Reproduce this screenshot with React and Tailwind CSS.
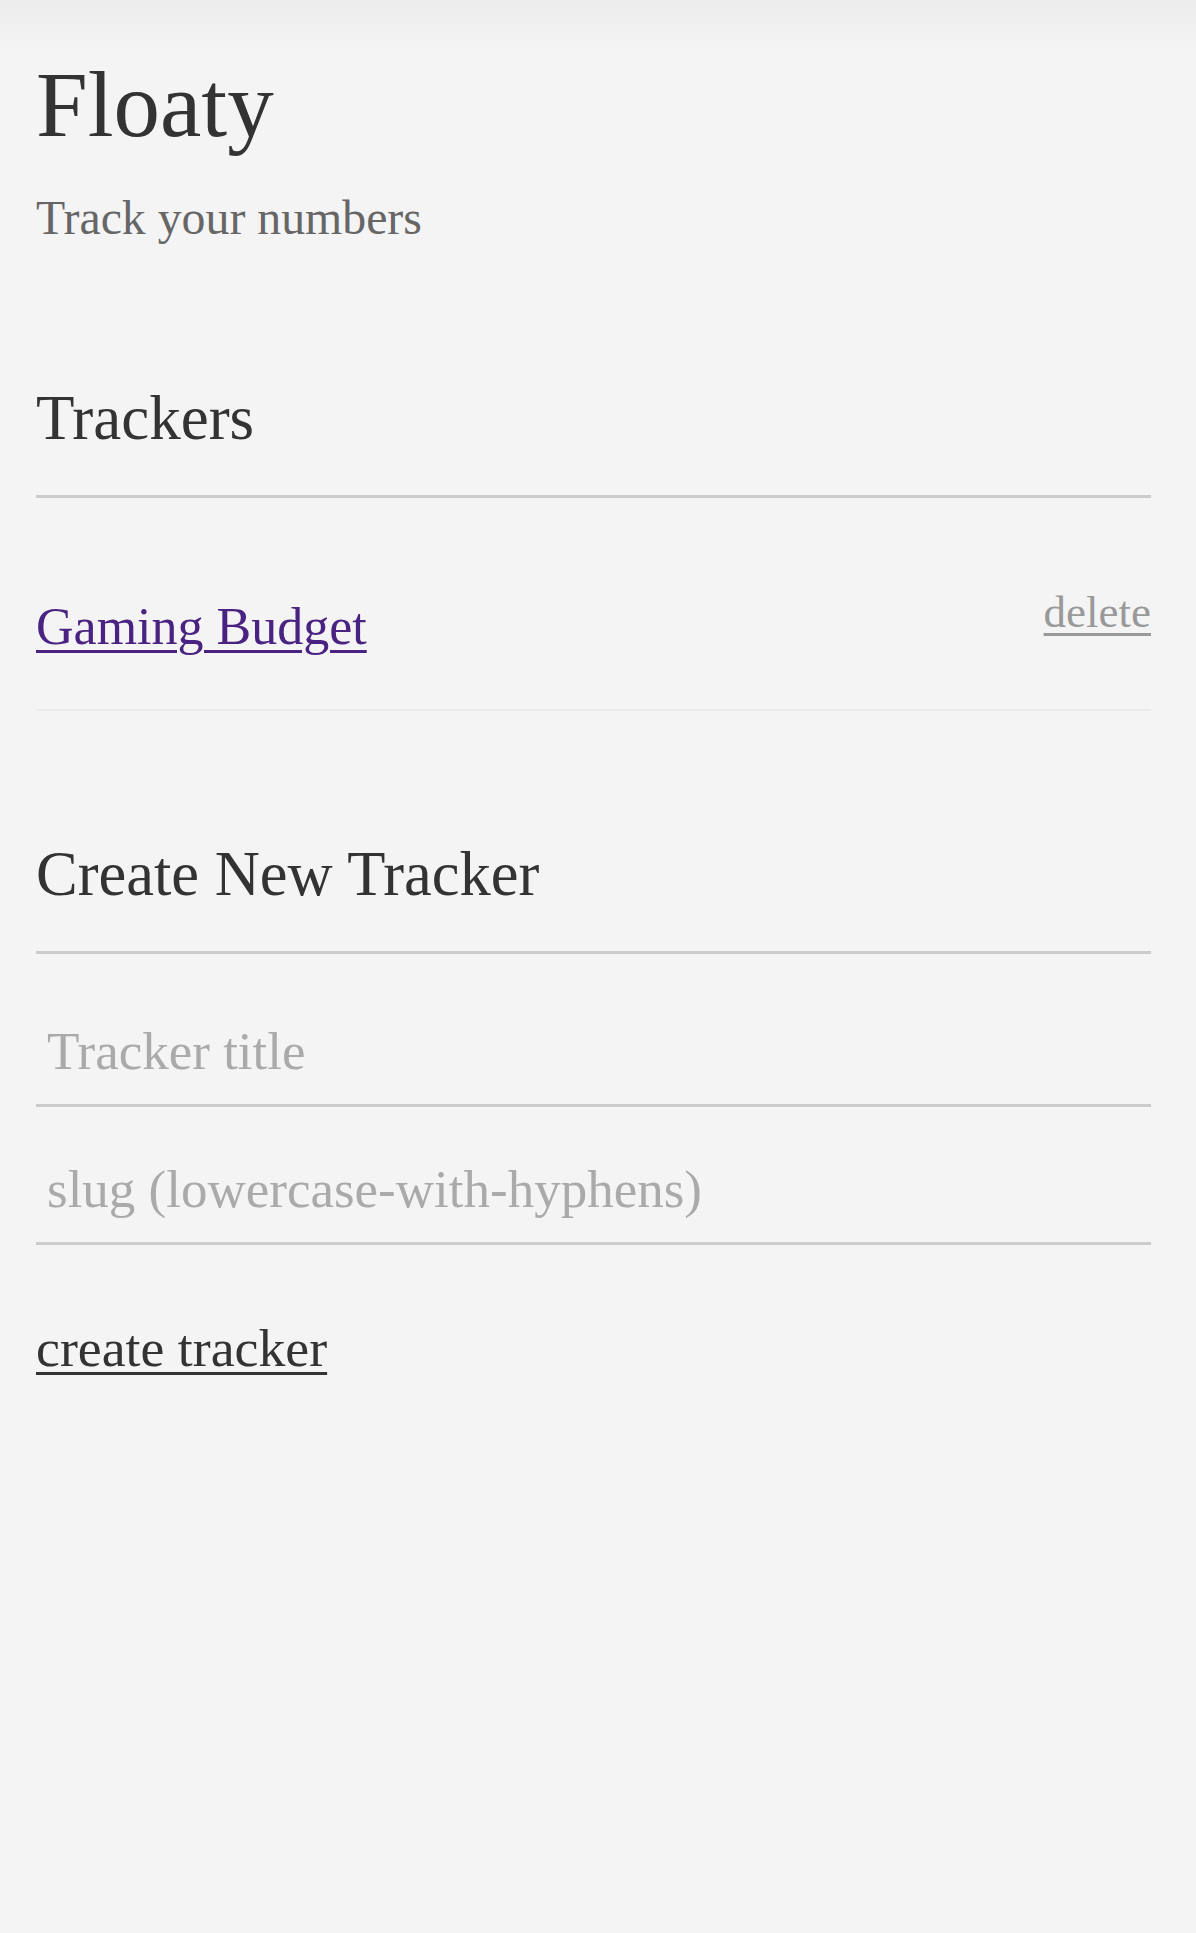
import React, { useState } from "react";

const serif = { fontFamily: '"Liberation Serif", "Times New Roman", serif' };

const App = () => {
  const [trackers, setTrackers] = useState([{ title: "Gaming Budget", slug: "gaming-budget" }]);
  const [form, setForm] = useState({ title: "", slug: "" });

  const handleChange = (e) => {
    setForm({ ...form, [e.target.name]: e.target.value });
  };

  const handleCreate = (e) => {
    e.preventDefault();
    if (!form.title || !form.slug) return;
    setTrackers([...trackers, form]);
    setForm({ title: "", slug: "" });
  };

  return (
    <div className="min-h-screen bg-[#f4f4f4] text-[#333]" style={serif}>
      <div className="h-[52px] bg-gradient-to-b from-[#ededed] to-[#f4f4f4]" />
      <div className="pl-[36px] pr-[45px]">
        <h1 className="mt-[6px] text-[93px] leading-[93px] font-normal">Floaty</h1>
        <p className="mt-[43px] text-[47.8px] leading-[48px] text-[#666]">Track your numbers</p>

        <h2 className="mt-[145px] pb-[46px] text-[63px] leading-[62px] font-normal border-b-[3px] border-[#ccc]">
          Trackers
        </h2>
        <ul>
          {trackers.map((t) => (
            <li
              key={t.slug}
              className="flex justify-between items-start pt-[92px] pb-[56px] border-b-2 border-[#ebebeb]"
            >
              <a
                href={`#${t.slug}`}
                className="mt-[11px] text-[52px] leading-[52px] text-[#4a2382] underline decoration-[3px] underline-offset-[6px]"
              >
                {t.title}
              </a>
              <button
                type="button"
                onClick={() => setTrackers(trackers.filter((x) => x.slug !== t.slug))}
                className="text-[45px] leading-[45px] text-[#999] underline decoration-[3px] underline-offset-[6px]"
              >
                delete
              </button>
            </li>
          ))}
        </ul>

        <h2 className="mt-[132px] pb-[46px] text-[62.5px] leading-[62px] font-normal border-b-[3px] border-[#ccc]">
          Create New Tracker
        </h2>
        <form onSubmit={handleCreate}>
          <input
            name="title"
            value={form.title}
            onChange={handleChange}
            placeholder="Tracker title"
            className="mt-[15px] block w-full bg-transparent pl-[11px] pt-[52px] pb-[23px] text-[53px] leading-[52px] border-b-[3px] border-[#ccc] outline-none placeholder:text-[#aaa]"
            style={serif}
          />
          <input
            name="slug"
            value={form.slug}
            onChange={handleChange}
            placeholder="slug (lowercase-with-hyphens)"
            className="block w-full bg-transparent pl-[11px] pt-[52px] pb-[23px] text-[53px] leading-[52px] border-b-[3px] border-[#ccc] outline-none placeholder:text-[#aaa]"
            style={serif}
          />
          <button
            type="submit"
            className="mt-[77px] block text-[53.8px] leading-[52px] text-[#333] underline decoration-[3px] underline-offset-[6px]"
            style={serif}
          >
            create tracker
          </button>
        </form>
      </div>
    </div>
  );
};

export default App;
